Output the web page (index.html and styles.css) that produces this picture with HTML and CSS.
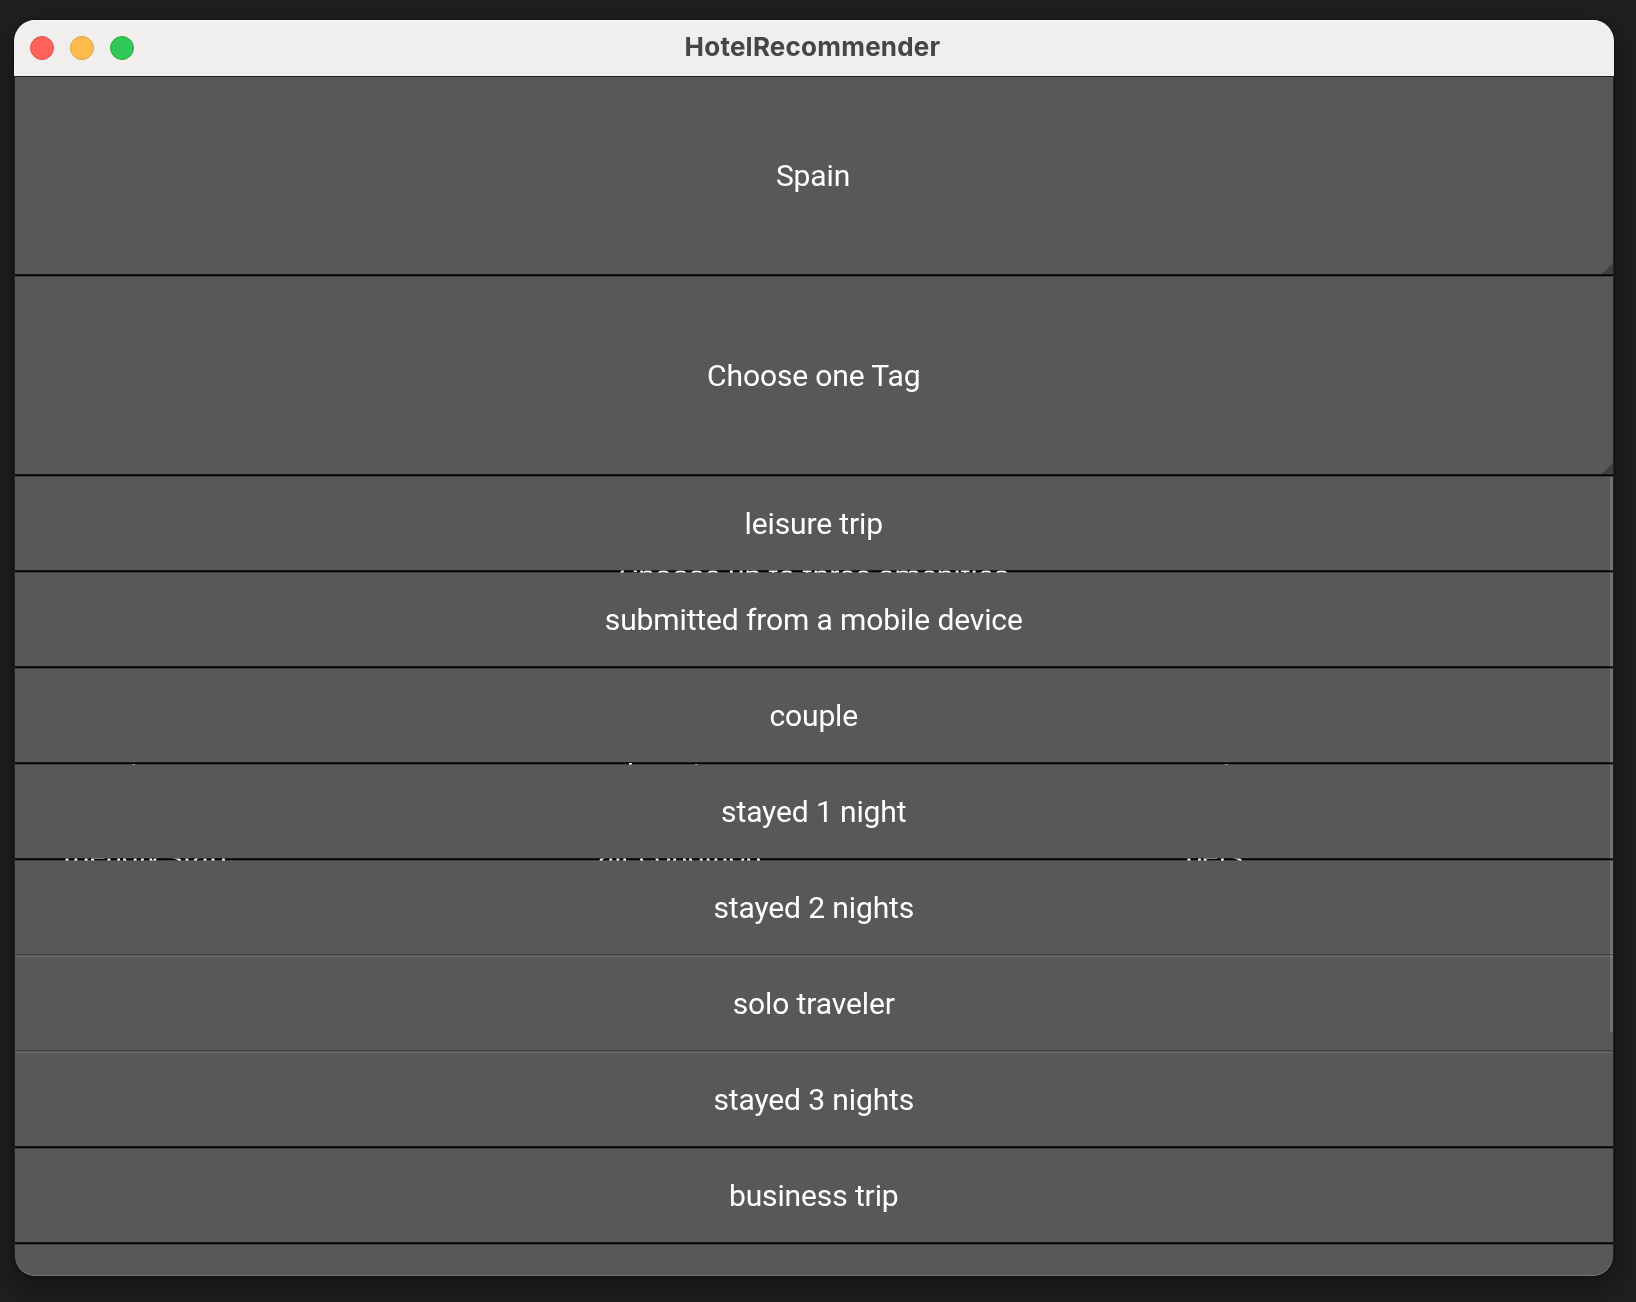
FILE: index.html
```
<!DOCTYPE html>
<html lang="en">
<head>
<meta charset="utf-8">
<title>HotelRecommender</title>
<link rel="stylesheet" href="styles.css">
</head>
<body>
<div class="window">
  <header class="titlebar">
    <div class="lights"><span class="light close"></span><span class="light minimize"></span><span class="light zoom"></span></div>
    <h1 class="title">HotelRecommender</h1>
  </header>
  <main class="content">
    <div class="form">
      <div class="prompt">Choose up to three amenities</div>
      <div class="amenities">
        <span>view</span><span>location</span><span>service</span>
        <span>friendly staff</span><span>air condition</span><span>pets</span>
      </div>
      <div class="submit"></div>
    </div>
    <div class="menu">
      <div class="item select">Spain</div>
      <div class="item select">Choose one Tag</div>
      <div class="item">leisure trip</div>
      <div class="item">submitted from a mobile device</div>
      <div class="item">couple</div>
      <div class="item">stayed 1 night</div>
      <div class="item">stayed 2 nights</div>
      <div class="item">solo traveler</div>
      <div class="item">stayed 3 nights</div>
      <div class="item">business trip</div>
      <div class="item"></div>
    </div>
    <div class="scrollbar"></div>
  </main>
</div>
</body>
</html>
```
FILE: styles.css
```
* { box-sizing: border-box; }
html, body { height: 100%; }
body {
  margin: 0;
  padding: 20px 22px 26px 14px;
  background: #1f1f1f;
  overflow: hidden;
}
.window {
  height: 1256px;
  display: flex;
  flex-direction: column;
  border-radius: 21px;
  overflow: hidden;
  background: #222;
  box-shadow: 0 12px 30px rgba(0, 0, 0, .38), 0 0 3px rgba(0, 0, 0, .5);
}
.titlebar {
  flex: none;
  height: 56px;
  display: grid;
  grid-template-columns: 1fr auto 1fr;
  align-items: center;
  background: #f0efed;
  border-top: 1px solid #fbfafa;
}
.lights { display: flex; gap: 16px; padding: 0 0 1px 16px; }
.light { width: 24px; height: 24px; border-radius: 50%; border: 1px solid; }
.close { background: #ff625b; border-color: #e0524c; }
.minimize { background: #fdbc4b; border-color: #dea03a; }
.zoom { background: #30c856; border-color: #25ad3d; }
.title {
  margin: 0;
  padding: 0 3px 3px 0;
  font: 700 26px/32px Inter, sans-serif;
  letter-spacing: .22px;
  color: #464646;
}
.content {
  position: relative;
  flex: 1;
  margin: 0 1px;
  overflow: hidden;
  background: #000;
  border-radius: 0 0 20px 20px;
  font: 30px/36px Roboto, sans-serif;
  color: #fff;
}
/* light rim along the window's lower edge */
.content::after {
  content: "";
  position: absolute;
  inset: 0;
  border-radius: inherit;
  box-shadow: inset 0 -1px #777;
}
.form { position: absolute; inset: 0; padding-top: 482px; }
.prompt { height: 36px; text-align: center; }
.amenities {
  display: grid;
  grid-template-columns: repeat(3, 1fr);
  grid-auto-rows: 81px;
  margin: 163px -2px 0 -3px;
  letter-spacing: -.14px;
}
.amenities span { width: 50%; text-align: center; }
.submit { height: 200px; margin-top: -43px; background: #585858; }
.menu { position: relative; letter-spacing: -.12px; }
.item {
  height: 95px;
  margin-bottom: 1px;
  padding-right: .5px;
  display: flex;
  align-items: center;
  justify-content: center;
  background: #585858 padding-box;
  border-top: 1px solid rgba(119, 119, 119, .57);
  border-bottom: 1px solid rgba(45, 45, 45, .6);
}
.select {
  height: 199px;
  background:
    linear-gradient(135deg, transparent 50%, #404040 50%) right bottom / 11px 11px no-repeat padding-box,
    #585858 padding-box;
}
.item:first-child { border-top-color: #222; padding-right: 2px; }
.scrollbar {
  position: absolute;
  right: 0;
  top: 401px;
  width: 3px;
  height: 555px;
  background: #373737;
  mix-blend-mode: color-dodge;
}
```
